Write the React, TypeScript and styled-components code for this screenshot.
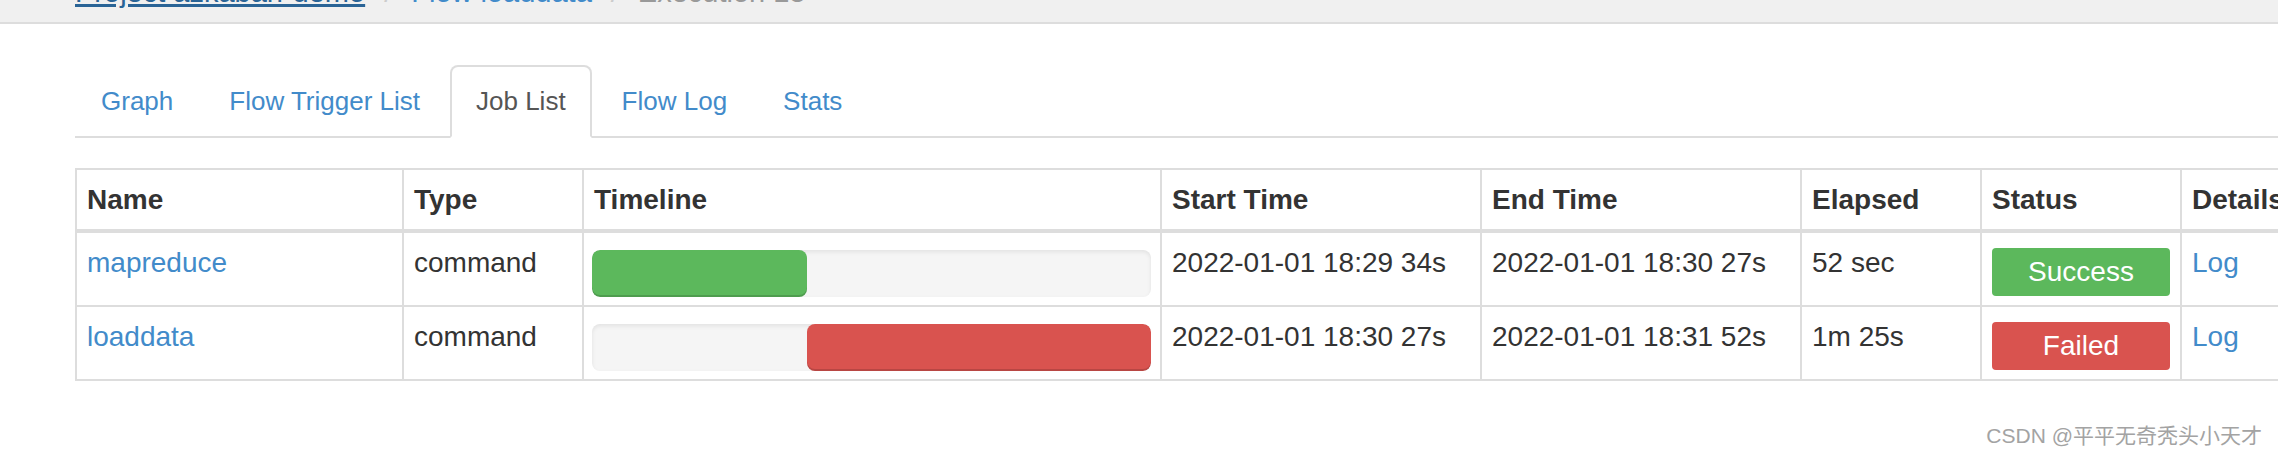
import * as React from "react";
import styled, { createGlobalStyle } from "styled-components";

const GlobalStyle = createGlobalStyle`
  html, body {
    margin: 0;
    padding: 0;
    background: #fff;
    overflow: hidden;
  }
  body {
    font-family: "Liberation Sans", Arial, Helvetica, sans-serif;
    color: #333;
  }
  * {
    box-sizing: border-box;
  }
`;

type Job = {
  name: string;
  type: string;
  start: string;
  end: string;
  elapsed: string;
  status: "success" | "failed";
  offset: number;
  duration: number;
};

const jobs: Job[] = [
  {
    name: "mapreduce",
    type: "command",
    start: "2022-01-01 18:29 34s",
    end: "2022-01-01 18:30 27s",
    elapsed: "52 sec",
    status: "success",
    offset: 0,
    duration: 53,
  },
  {
    name: "loaddata",
    type: "command",
    start: "2022-01-01 18:30 27s",
    end: "2022-01-01 18:31 52s",
    elapsed: "1m 25s",
    status: "failed",
    offset: 53,
    duration: 85,
  },
];

// total span of the flow in seconds (18:29:34 -> 18:31:52)
const TOTAL = 138;

const tabs = ["Graph", "Flow Trigger List", "Job List", "Flow Log", "Stats"];

export default function App() {
  const [activeTab, setActiveTab] = React.useState("Job List");

  return (
    <Page>
      <GlobalStyle />
      <PageHeader>
        <Breadcrumb>
          <CrumbLink $dark>Project azkaban-demo</CrumbLink>
          <Separator>/</Separator>
          <CrumbLink>Flow loaddata</CrumbLink>
          <Separator>/</Separator>
          <CrumbCurrent>Execution 15</CrumbCurrent>
        </Breadcrumb>
      </PageHeader>

      <Main>
        <TabList>
          {tabs.map((t) => (
            <TabItem key={t}>
              <TabLink
                $active={t === activeTab}
                onClick={() => setActiveTab(t)}
              >
                {t}
              </TabLink>
            </TabItem>
          ))}
        </TabList>

        <JobTable>
          <thead>
            <tr>
              <HeadCell $width={327}>Name</HeadCell>
              <HeadCell $width={180}>Type</HeadCell>
              <HeadCell $width={578}>Timeline</HeadCell>
              <HeadCell $width={320}>Start Time</HeadCell>
              <HeadCell $width={320}>End Time</HeadCell>
              <HeadCell $width={180}>Elapsed</HeadCell>
              <HeadCell $width={200}>Status</HeadCell>
              <HeadCell $width={150}>Details</HeadCell>
            </tr>
          </thead>
          <tbody>
            {jobs.map((job) => (
              <tr key={job.name}>
                <Cell>
                  <Link>{job.name}</Link>
                </Cell>
                <Cell>{job.type}</Cell>
                <TimelineCell>
                  <Track>
                    <Bar
                      $status={job.status}
                      style={{
                        left: `${(job.offset / TOTAL) * 100}%`,
                        width: `${(job.duration / TOTAL) * 100}%`,
                      }}
                    />
                  </Track>
                </TimelineCell>
                <Cell>{job.start}</Cell>
                <Cell>{job.end}</Cell>
                <Cell>{job.elapsed}</Cell>
                <StatusCell>
                  <StatusLabel $status={job.status}>
                    {job.status === "success" ? "Success" : "Failed"}
                  </StatusLabel>
                </StatusCell>
                <Cell>
                  <Link>Log</Link>
                </Cell>
              </tr>
            ))}
          </tbody>
        </JobTable>
      </Main>

      <Watermark>CSDN @平平无奇秃头小天才</Watermark>
    </Page>
  );
}

const Page = styled.div`
  position: relative;
  width: 2278px;
  height: 455px;
  overflow: hidden;
`;

const PageHeader = styled.header`
  height: 24px;
  background-color: #f0f0f0;
  border-bottom: 2px solid #dddddd;
  padding-left: 75px;
  overflow: hidden;
`;

const Breadcrumb = styled.div`
  display: flex;
  align-items: baseline;
  margin-top: -24px;
  font-size: 29px;
  line-height: 32px;
  white-space: nowrap;
`;

const CrumbLink = styled.a<{ $dark?: boolean }>`
  color: ${(p) => (p.$dark ? "#2a6496" : "#428bca")};
  text-decoration: ${(p) => (p.$dark ? "underline" : "none")};
  text-decoration-thickness: 3px;
  cursor: pointer;
`;

const Separator = styled.span`
  color: #cccccc;
  margin: 0 19px;
`;

const CrumbCurrent = styled.span`
  color: #999999;
`;

const Main = styled.main`
  width: 2332px;
  padding: 41px 0 0 75px;
`;

const TabList = styled.ul`
  display: flex;
  list-style: none;
  margin: 0;
  padding: 0;
  border-bottom: 2px solid #dddddd;
`;

const TabItem = styled.li`
  margin: 0 4px -2px 0;
`;

const TabLink = styled.a<{ $active?: boolean }>`
  display: block;
  padding: 14px 24px 15px;
  font-size: 26px;
  line-height: 40px;
  border: 2px solid transparent;
  border-radius: 8px 8px 0 0;
  cursor: pointer;
  color: ${(p) => (p.$active ? "#555555" : "#428bca")};
  background-color: ${(p) => (p.$active ? "#ffffff" : "transparent")};
  border-color: ${(p) =>
    p.$active ? "#dddddd #dddddd transparent" : "transparent"};
`;

const JobTable = styled.table`
  margin-top: 30px;
  width: 2257px;
  table-layout: fixed;
  border-collapse: separate;
  border-spacing: 0;
  border-top: 2px solid #dddddd;
  border-left: 2px solid #dddddd;
  font-size: 28px;
  line-height: 40px;
`;

const HeadCell = styled.th<{ $width: number }>`
  width: ${(p) => p.$width}px;
  padding: 10px 10px 9px;
  text-align: left;
  font-weight: bold;
  color: #333333;
  white-space: nowrap;
  overflow: hidden;
  border-right: 2px solid #dddddd;
  border-bottom: 4px solid #dddddd;
`;

const Cell = styled.td`
  padding: 10px 10px 22px;
  vertical-align: top;
  white-space: nowrap;
  overflow: hidden;
  color: #333333;
  border-right: 2px solid #dddddd;
  border-bottom: 2px solid #dddddd;
`;

const TimelineCell = styled(Cell)`
  padding: 17px 9px 8px 8px;
`;

const StatusCell = styled(Cell)`
  padding: 15px 10px 9px;
`;

const Link = styled.a`
  color: #428bca;
  text-decoration: none;
  cursor: pointer;
`;

const Track = styled.div`
  position: relative;
  height: 47px;
  border-radius: 8px;
  background-color: #f5f5f5;
  box-shadow: inset 0 2px 4px rgba(0, 0, 0, 0.08);
  overflow: hidden;
`;

const Bar = styled.div<{ $status: "success" | "failed" }>`
  position: absolute;
  top: 0;
  bottom: 0;
  border-radius: 8px;
  background-color: ${(p) => (p.$status === "success" ? "#5cb85c" : "#d9534f")};
  box-shadow: inset 0 -2px 0 rgba(0, 0, 0, 0.15);
`;

const StatusLabel = styled.div<{ $status: "success" | "failed" }>`
  height: 48px;
  line-height: 48px;
  border-radius: 4px;
  text-align: center;
  color: #ffffff;
  font-size: 28px;
  background-color: ${(p) => (p.$status === "success" ? "#5cb85c" : "#d9534f")};
`;

const Watermark = styled.div`
  position: absolute;
  right: 16px;
  top: 423px;
  font-family: "Liberation Sans", Arial, "Noto Sans CJK SC", sans-serif;
  font-size: 21px;
  line-height: 26px;
  color: #a3a3a3;
  text-shadow: 0 1px 0 #ffffff;
  white-space: nowrap;
`;
